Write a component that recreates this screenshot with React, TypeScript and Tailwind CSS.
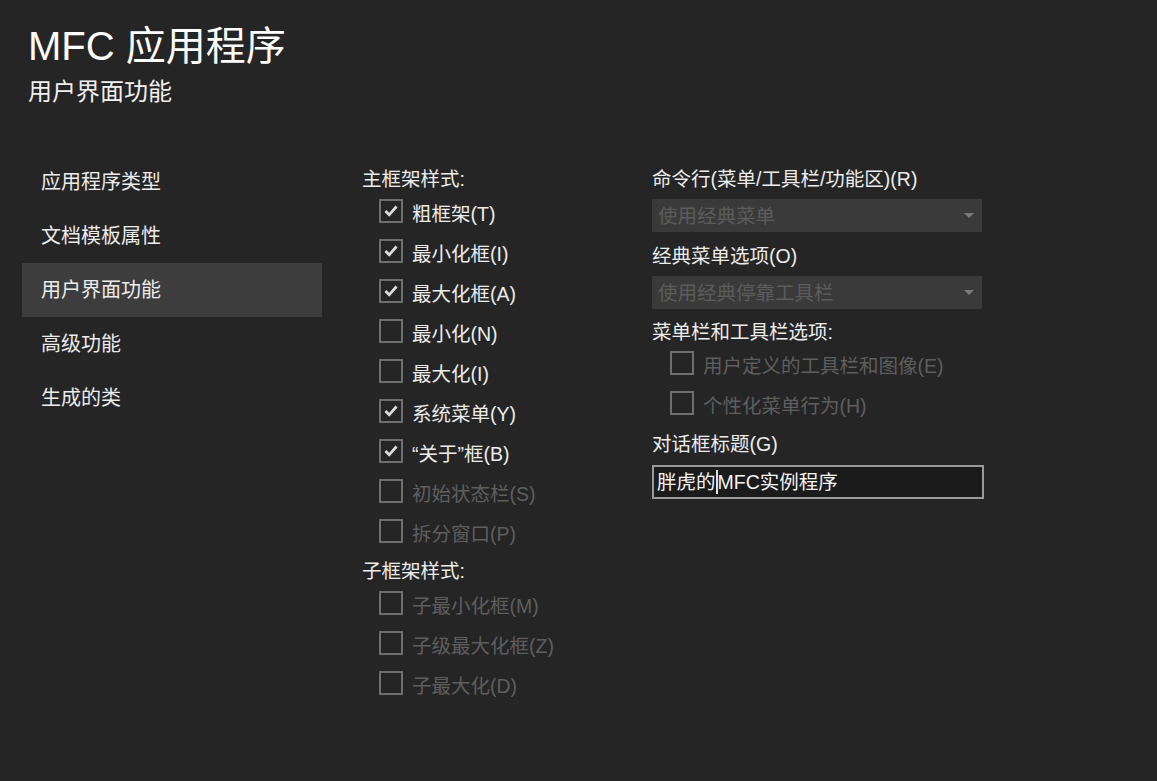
import React from 'react';

const font = { fontFamily: '"Liberation Sans", "Noto Sans CJK SC", sans-serif' };

type CheckProps = { label: string; checked?: boolean; disabled?: boolean; indent?: string };

const CheckRow: React.FC<CheckProps> = ({ label, checked, disabled, indent = 'pl-[17px]' }) => (
  <div className={`flex h-[40px] items-center ${indent}`}>
    <div className="flex h-[24px] w-[24px] shrink-0 items-center justify-center border-2 border-[#6f6f6f] -mt-[8px]">
      {checked && (
        <svg width="16" height="14" viewBox="0 0 16 14">
          <path d="M2.5 7 L6.2 10.8 L13.5 2.5" fill="none" stroke="#dcdcdc" strokeWidth="2.8" />
        </svg>
      )}
    </div>
    <span className={`ml-[9px] text-[19.5px] ${disabled ? 'text-[#5e5e5e]' : 'text-[#ececec]'}`}>{label}</span>
  </div>
);

const Dropdown: React.FC<{ text: string }> = ({ text }) => (
  <div className="flex h-[33px] w-[330px] items-center justify-between bg-[#3a3a3a] pl-[6px] pr-[8px]">
    <span className="mt-[2px] text-[19.5px] text-[#5c5c5c]">{text}</span>
    <svg width="10" height="6" viewBox="0 0 10 6">
      <path d="M0 0 L10 0 L5 5 Z" fill="#7a7a7a" />
    </svg>
  </div>
);

const navItems = ['应用程序类型', '文档模板属性', '用户界面功能', '高级功能', '生成的类'];

export default function App() {
  return (
    <div className="h-[781px] w-[1157px] overflow-hidden bg-[#252526] text-[#ececec]" style={font}>
      {/* header */}
      <div className="pl-[28px] pt-[18px]">
        <div className="h-[56px] text-[40px] leading-[56px] text-white">MFC 应用程序</div>
        <div className="mt-[2px] h-[32px] text-[24px] leading-[32px] text-[#f0f0f0]">用户界面功能</div>
      </div>

      <div className="mt-[57px] flex">
        {/* sidebar */}
        <div className="ml-[22px] mt-[-10px] w-[300px]">
          {navItems.map((item, i) => (
            <div
              key={item}
              className={`flex h-[54px] items-center pl-[19px] text-[20px] ${i === 2 ? 'bg-[#3d3d3d]' : ''}`}
            >
              {item}
            </div>
          ))}
        </div>

        {/* middle column */}
        <div className="ml-[40px] w-[290px]">
          <div className="flex h-[30px] items-center text-[19.5px]">主框架样式:</div>
          <CheckRow label="粗框架(T)" checked />
          <CheckRow label="最小化框(I)" checked />
          <CheckRow label="最大化框(A)" checked />
          <CheckRow label="最小化(N)" />
          <CheckRow label="最大化(I)" />
          <CheckRow label="系统菜单(Y)" checked />
          <CheckRow label="“关于”框(B)" checked />
          <CheckRow label="初始状态栏(S)" disabled />
          <CheckRow label="拆分窗口(P)" disabled />
          <div className="mt-[2px] flex h-[30px] items-center text-[19.5px]">子框架样式:</div>
          <CheckRow label="子最小化框(M)" disabled />
          <CheckRow label="子级最大化框(Z)" disabled />
          <CheckRow label="子最大化(D)" disabled />
        </div>

        {/* right column */}
        <div className="w-[340px]">
          <div className="flex h-[30px] items-center text-[19.5px]">命令行(菜单/工具栏/功能区)(R)</div>
          <div className="mt-[4px]">
            <Dropdown text="使用经典菜单" />
          </div>
          <div className="mt-[10px] flex h-[30px] items-center text-[19.5px]">经典菜单选项(O)</div>
          <div className="mt-[4px]">
            <Dropdown text="使用经典停靠工具栏" />
          </div>
          <div className="mt-[10px] flex h-[28px] items-center text-[19.5px]">菜单栏和工具栏选项:</div>
          <CheckRow label="用户定义的工具栏和图像(E)" disabled indent="pl-[18px]" />
          <CheckRow label="个性化菜单行为(H)" disabled indent="pl-[18px]" />
          <div className="mt-[3px] flex h-[30px] items-center text-[19.5px]">对话框标题(G)</div>
          <div className="mt-[5px] flex h-[34px] w-[332px] items-center border-2 border-[#9a9a9a] bg-[#1b1b1b] pl-[3px] text-[19.5px] text-[#f4f4f4]">
            <span className="mt-[2px]">胖虎的</span>
            <span className="h-[24px] w-[2px] bg-[#e0e0e0]" />
            <span className="mt-[2px]">MFC实例程序</span>
          </div>
        </div>
      </div>
    </div>
  );
}
